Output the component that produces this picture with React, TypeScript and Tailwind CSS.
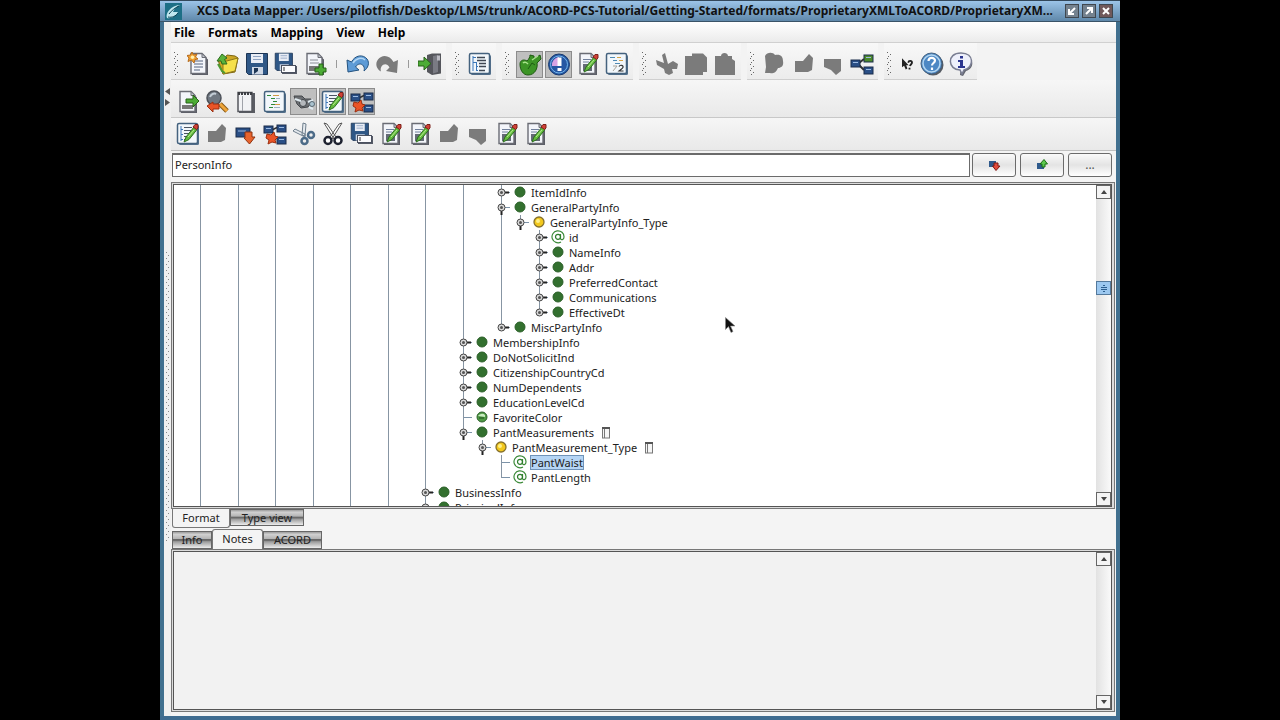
import { useState, type ReactNode } from "react";

type IconProps = { children: ReactNode };

function Glyph({ children }: IconProps) {
  return (
    <svg viewBox="0 0 24 24" width="24" height="24" fill="none" aria-hidden="true">
      {children}
    </svg>
  );
}

/* ---------- shared icon parts ---------- */

function Paper() {
  return (
    <>
      <path d="M5 2.500h10.500l5.500 5V23H5z" fill="#5b5d66" />
      <path d="M4 1.500h11l4 4V21.500H4z" fill="#f3f5fa" stroke="#6a6c74" strokeWidth="1.400" />
      <path d="M15 1.500v4h4z" fill="#c5c8d0" stroke="#6a6c74" />
    </>
  );
}

function Lines() {
  return <path d="M7 9h9M7 12h9M7 15h9M7 18h6" stroke="#8a94a8" strokeWidth="1.400" />;
}

function Pencil() {
  return (
    <>
      <path d="M8 20l2-5 8-10 3 2.500-8 10z" fill="#63bb3f" stroke="#2c6d1e" />
      <path d="M17 5l2-2.500h3V6l-1.500 1.500z" fill="#cf4136" stroke="#7d2018" />
      <path d="M12 15l6-7" stroke="#b6ec8e" />
    </>
  );
}

function Panel() {
  return (
    <>
      <rect x="3" y="3" width="20" height="20" rx="1.500" fill="#54718c" />
      <rect x="1.500" y="1.500" width="20" height="20" rx="1.500" fill="#f2f7fb" stroke="#44627e" strokeWidth="1.500" />
    </>
  );
}

function Floppy() {
  return (
    <>
      <path d="M1.500 1.500h21v21h-19l-2-2z" fill="#2f5786" stroke="#1d3554" />
      <rect x="6" y="2" width="12" height="9" fill="#e9edf5" />
      <path d="M8 4.500h8M8 7.500h8" stroke="#8ea3c2" />
      <rect x="7" y="15" width="11" height="7.500" fill="#cfd8e6" />
      <path d="M9 16h4v3l-4 3z" fill="#1d3554" />
    </>
  );
}

function Box({ x, y, color = "#2a4f86" }: { x: number; y: number; color?: string }) {
  return (
    <>
      <rect x={x} y={y} width="9" height="7" fill={color} stroke="#1b2d4a" />
      <path d={`M${x + 2} ${y + 2.5}h5`} stroke="#9dbbe2" />
    </>
  );
}

/* ---------- icons ---------- */

const newDoc = (
  <Glyph>
    <Paper />
    <Lines />
    <path d="M5 0l1.500 3L10 2 8.500 5 11 7 8 7.500 7 11 4.500 8 1 9.500 2 6 0 3.500l3.500-.5z" fill="#f0a132" stroke="#b56a1c" />
    <circle cx="5.500" cy="5.200" r="1.800" fill="#fff0b0" />
  </Glyph>
);
const openFolder = (
  <Glyph>
    <path d="M2 8l7-2 2-3 8 1 3 2-3 14-12 2z" fill="#cda724" stroke="#7c6512" />
    <path d="M7 10l15-4-3 13-12 3z" fill="#f6e04a" stroke="#8d7618" />
    <path d="M1 9l5-7 5 4-2.500 1.500L11 12H6l-1-3z" fill="#59b33c" stroke="#2c6d1e" />
    <path d="M2 12l4 7 3 2" stroke="#4d9b33" strokeWidth="2" />
  </Glyph>
);
const save = <Glyph><Floppy /></Glyph>;
const saveAs = (
  <Glyph>
    <g transform="scale(.82)"><Floppy /></g>
    <rect x="8" y="14" width="15" height="8" fill="#555a66" />
    <rect x="7.500" y="13.500" width="14" height="7" fill="#fbfbfd" stroke="#4b5160" />
    <path d="M10 15v4" stroke="#333" />
  </Glyph>
);
const docPlus = (
  <Glyph>
    <Paper />
    <rect x="6" y="14" width="10" height="5" fill="#777" />
    <path d="M7 8h8M7 11h9" stroke="#8a8d96" />
    <path d="M16 12h4v4h3v4h-3v3h-4v-3h-4v-4h4z" fill="#4cab35" stroke="#276118" />
  </Glyph>
);
const undo = (
  <Glyph>
    <path d="M1 8l1 12 11-2-3.500-3c2-3.500 6-4 8-1 1 2 1 3 .5 5 4-3 6-8 3-12C17 2 9 3 5.500 10z" fill="#5e9bd6" stroke="#23527f" />
    <path d="M7 11c3-5 9-6 12-3" stroke="#b4d7f4" strokeWidth="1.500" />
  </Glyph>
);
const redo = (
  <Glyph>
    <path d="M23 8l-1 13-11-2 3.500-3.500c-2-4-6-4-8-1-1 2-1 3-.5 5C1 17 0 11 3 7.500 7 2 15 3 18.500 10z" fill="#7b7b7b" />
  </Glyph>
);
const exit = (
  <Glyph>
    <path d="M9 3l5-1.500h9v20l-9 1.500-5-3z" fill="#55565c" />
    <path d="M15 4l5-1v17l-5 1.500z" fill="#7a7b83" />
    <path d="M19 3.500h3v5h-3z" fill="#bcbcc4" />
    <path d="M0 9h6V5l7 6.500L6 18v-4H0z" fill="#4cab35" stroke="#276118" />
  </Glyph>
);
const treeView = (
  <Glyph>
    <Panel />
    <path d="M5 4v15M5 5.500h3M5 10.500h3M8.500 10v9M8 14.500h2M8 18.500h2" stroke="#3c77b8" />
    <path d="M9 5.500h8M9 8.500h9M11 11.500h7M11 14.500h7M11 18.500h6" stroke="#3f4753" strokeWidth="1.400" />
  </Glyph>
);
const apple = (
  <Glyph>
    <path d="M2 12c0-4 4-5 7-3 2-2 3-4 3-6l4 1v3l6-4 1 4-4 4c1 5-2 12-9 12-5 0-8-5-8-11z" fill="#3c9426" stroke="#1f5a13" />
    <path d="M5 11c2-2 4 0 5 1M14 8l6-4" stroke="#a8e38b" strokeWidth="1.500" />
    <path d="M10 17l4-6 3 2" stroke="#1d5c12" />
  </Glyph>
);
const alertOrb = (
  <Glyph>
    <circle cx="12" cy="12.500" r="10.500" fill="#2657a3" stroke="#163a70" />
    <path d="M12 5a8 8 0 0 0-7 9h7z" fill="#d7a3e4" />
    <circle cx="12" cy="12.500" r="8.500" stroke="#73b6ea" />
    <path d="M10.500 5.500h4v8.500h-4zM10.500 16h4v3h-4z" fill="#fff" />
  </Glyph>
);
const editDoc = (
  <Glyph>
    <Paper />
    <rect x="7" y="12" width="9" height="7" fill="#646a76" />
    <path d="M7 7.500h8M7 10h6" stroke="#71809c" />
    <Pencil />
  </Glyph>
);
const format2 = (
  <Glyph>
    <Panel />
    <path d="M5 5.500h5M8 8.500h4M10 11.500h5" stroke="#4f8bb5" />
    <path d="M12 5.500h4M14 8.500h4" stroke="#d6a246" />
    <path d="M8 14h4l-4 5" stroke="#a8a39a" />
    <path d="M14 14.500c1-2 4.500-1.500 4 .8-.3 1.200-2.500 2.200-4 3.700h4.500" stroke="#333" strokeWidth="1.200" />
  </Glyph>
);
const cutGrey = (
  <Glyph>
    <path d="M1 8l8 3-2-8 3-2 3 11 5-3 5 3-1 5-5 0 1 4-4 2-4-2-1-4-7-4z" fill="#7b7b7b" />
  </Glyph>
);
const copyGrey = (
  <Glyph>
    <path d="M1 4h7V1.500h11l4 4V20H19v3H1z" fill="#7b7b7b" />
  </Glyph>
);
const pasteGrey = (
  <Glyph>
    <path d="M2 4h6c0-4 7-4 7 0h4v3l3 2v14H2z" fill="#7b7b7b" />
  </Glyph>
);
const blobGrey = (
  <Glyph>
    <path d="M2 4c2-4 8-4 10-1 6-1 8 2 8 6 1 5-2 7-5 7-2 5-6 6-8 5H2l1-6z" fill="#7b7b7b" />
  </Glyph>
);
const upGrey = (
  <Glyph>
    <path d="M3 9h8l6-7 4 4-1 12-4 2H3z" fill="#7b7b7b" />
  </Glyph>
);
const downGrey = (
  <Glyph>
    <path d="M3 7h17v12l-5 4-5-5-7-3z" fill="#7b7b7b" />
  </Glyph>
);
const mapNodes = (
  <Glyph>
    <path d="M9 11l5-4M9 13l5 5" stroke="#333" strokeWidth="2" />
    <Box x={1} y={8} />
    <Box x={14} y={3} color="#4c8a2b" />
    <Box x={14} y={15} />
  </Glyph>
);
const whatsThis = (
  <Glyph>
    <path d="M6 5v11l2.500-2 2 4.500 2-1-1.500-4h3z" fill="#222" />
    <path d="M13.500 10.500c.5-3 4.500-2.500 4.500 0 0 1.500-2 2-2.500 4M15 16.500v2" stroke="#222" strokeWidth="2.200" />
    <path d="M15 10h1.500" stroke="#eee" />
  </Glyph>
);
const help = (
  <Glyph>
    <circle cx="13" cy="13" r="10.500" fill="#555a62" />
    <circle cx="11.500" cy="11.500" r="10.500" fill="#4d88c4" stroke="#44617f" />
    <circle cx="11.500" cy="11.500" r="8.500" stroke="#b5d7f1" strokeWidth="1.500" />
    <path d="M8.500 9c0-4 6.500-4 6.500-.5 0 2.500-3 2.500-3 5M12 15.500v2.500" stroke="#fff" strokeWidth="2.200" />
  </Glyph>
);
const info = (
  <Glyph>
    <path d="M13 3c13 0 13 14 4 16l-3 5-3-1z" fill="#62656f" />
    <path d="M12 1c14 0 13 15 3 17l-2 4-2-4C-1 18-3 1 12 1z" fill="#eef0fb" stroke="#7a7e92" strokeWidth="1.500" />
    <path d="M11 4h3v2.500h-3zM9 8h5v6h2v2H9v-2h2v-4H9z" fill="#2b3590" />
  </Glyph>
);
const docArrow = (
  <Glyph>
    <Paper />
    <rect x="6" y="15" width="11" height="4" fill="#777" />
    <path d="M10 9h7V5l6 6-6 6v-4h-7z" fill="#4cab35" stroke="#276118" />
  </Glyph>
);
const searchBack = (
  <Glyph>
    <path d="M15 14l7 7" stroke="#8a5a14" strokeWidth="5" />
    <path d="M15 14l7 7" stroke="#eea53a" strokeWidth="3" />
    <circle cx="9" cy="8" r="7" fill="#6f7781" stroke="#4b5058" strokeWidth="1.500" />
    <path d="M5 7c1-3 4-4 6-3" stroke="#c3cdd6" strokeWidth="2" />
    <path d="M2 16l6-4v2h6v5H8v3z" fill="#ea5427" stroke="#9c2f10" />
  </Glyph>
);
const notepad = (
  <Glyph>
    <rect x="5" y="3" width="16" height="20" fill="#5a5c63" />
    <rect x="4" y="2.500" width="14" height="19" fill="#f1f2f5" stroke="#55575e" strokeWidth="1.500" />
    <path d="M4 3.500h14" stroke="#3c3e44" strokeWidth="3" strokeDasharray="2 1" />
    <path d="M8.500 6v15" stroke="#9fa2aa" />
  </Glyph>
);
const outline = (
  <Glyph>
    <Panel />
    <path d="M4 5.500h4M8 8.500h4M10 11.500h4M8 14.500h4M6 17.500h4" stroke="#2f8a3a" strokeWidth="1.200" />
    <path d="M10 5.500h6M12 14.500h5" stroke="#d09a44" />
    <path d="M13 8.500h4M11 17.500h6" stroke="#9fb0c2" />
  </Glyph>
);
const eyeTool = (
  <Glyph>
    <path d="M2 6h8l3 3h6v4l-3 4-7 1-4-4z" fill="#6c6f73" stroke="#45484c" />
    <circle cx="11" cy="13" r="3.500" fill="#b4b8bc" stroke="#3e4246" />
    <path d="M16 12l5-2M17 17l4 2M3 9l6 2" stroke="#dfeaf0" strokeWidth="2" />
    <circle cx="20" cy="14" r="2.500" fill="#aac3d0" stroke="#5a6a74" />
  </Glyph>
);
const editPanel = (
  <Glyph>
    <Panel />
    <path d="M5 4v15M5 7.500h2M5 12.500h2M5 17.500h2" stroke="#3c77b8" />
    <path d="M8 5.500h8M8 8.500h7M8 11.500h5M8 14.500h4M8 17.500h3" stroke="#4b5664" strokeWidth="1.200" />
    <Pencil />
  </Glyph>
);
const unlink = (
  <Glyph>
    <path d="M9 8l6-3M11 14l5 4" stroke="#333" strokeWidth="1.500" />
    <Box x={1} y={4} />
    <Box x={14} y={3} />
    <Box x={14} y={15} />
    <path d="M4 12l4 1 3-3 1 4 3 1-3 3 1 3-4-1-4 2 1-4-3-2z" fill="#ea5427" stroke="#9c2f10" />
  </Glyph>
);
const boxDown = (
  <Glyph>
    <rect x="2" y="6" width="14" height="9" fill="#2a4f86" stroke="#1b2d4a" />
    <path d="M4 9h8" stroke="#9dbbe2" />
    <path d="M11 10h7v5h3l-5.500 7L10 16h1z" fill="#e8642d" stroke="#8e3211" />
  </Glyph>
);
const scissorsBlue = (
  <Glyph>
    <path d="M11 1l3 1-1 12-3-1zM1 9l2-2 10 5v3z" fill="#e4e9ee" stroke="#6f7f8d" />
    <circle cx="12.500" cy="19" r="3" stroke="#4c6b88" strokeWidth="2.500" />
    <circle cx="19" cy="13" r="3" stroke="#4c6b88" strokeWidth="2.500" />
  </Glyph>
);
const scissors = (
  <Glyph>
    <path d="M3 1l3 1 9 13-2 2zM21 1l-3 1-9 13 2 2z" fill="#fff" stroke="#555" />
    <circle cx="7" cy="18.500" r="3.500" fill="#fff" stroke="#1e2230" strokeWidth="2.500" />
    <circle cx="17" cy="18.500" r="3.500" fill="#fff" stroke="#1e2230" strokeWidth="2.500" />
  </Glyph>
);

/* ---------- toolbars ---------- */

type Tool = { label: string; icon: ReactNode; pressed?: boolean } | "gap";

function ToolButton({ label, icon, pressed }: { label: string; icon: ReactNode; pressed?: boolean }) {
  return (
    <button
      type="button"
      aria-label={label}
      aria-pressed={pressed}
      className={
        "mx-px flex h-[27px] w-[27px] items-center justify-center " +
        (pressed ? "border border-[#8c8c8c] bg-[#bfbfbf]" : "")
      }
    >
      {icon}
    </button>
  );
}

function Tools({ items }: { items: Tool[] }) {
  return (
    <>
      {items.map((t, i) =>
        t === "gap" ? (
          <span key={i} className="flex w-[14px] justify-center">
            <span className="h-2 w-px bg-[#9a9a9a]" />
          </span>
        ) : (
          <ToolButton key={i} {...t} />
        ),
      )}
    </>
  );
}

function Grip() {
  return (
    <svg width="13" height="26" aria-hidden="true">
      {[1, 7, 13, 19].map((y) => (
        <g key={y} fill="#666">
          <rect x="3" y={y} width="1" height="1" />
          <rect x="6" y={y + 2} width="1" height="1" />
          <rect x="4" y={y + 4} width="1" height="1" />
        </g>
      ))}
    </svg>
  );
}

const groups: Tool[][] = [
  [
    { label: "New", icon: newDoc },
    { label: "Open", icon: openFolder },
    { label: "Save", icon: save },
    { label: "Save as", icon: saveAs },
    { label: "Add file", icon: docPlus },
    "gap",
    { label: "Undo", icon: undo },
    { label: "Redo", icon: redo },
    "gap",
    { label: "Exit", icon: exit },
  ],
  [{ label: "Tree view", icon: treeView }],
  [
    { label: "Validate", icon: apple, pressed: true },
    { label: "Warnings", icon: alertOrb, pressed: true },
    { label: "Edit file", icon: editDoc },
    { label: "Format source", icon: format2 },
  ],
  [
    { label: "Cut", icon: cutGrey },
    { label: "Copy", icon: copyGrey },
    { label: "Paste", icon: pasteGrey },
  ],
  [
    { label: "Add node", icon: blobGrey },
    { label: "Move up", icon: upGrey },
    { label: "Move down", icon: downGrey },
    { label: "Map nodes", icon: mapNodes },
  ],
];

const secondRow: Tool[] = [
  { label: "Import", icon: docArrow },
  { label: "Find previous", icon: searchBack },
  { label: "Notepad", icon: notepad },
  { label: "Outline", icon: outline },
  { label: "Show hidden", icon: eyeTool, pressed: true },
  { label: "Show edits", icon: editPanel, pressed: true },
  { label: "Show unmapped", icon: unlink, pressed: true },
];

const thirdRow: Tool[] = [
  { label: "Edit tree", icon: editPanel },
  { label: "Raise", icon: upGrey },
  { label: "Insert below", icon: boxDown },
  { label: "Unlink", icon: unlink },
  { label: "Trim", icon: scissorsBlue },
  { label: "Cut node", icon: scissors },
  { label: "Save node as", icon: saveAs },
  { label: "Edit node", icon: editDoc },
  { label: "Edit type", icon: editDoc },
  { label: "Promote", icon: upGrey },
  { label: "Demote", icon: downGrey },
  { label: "Edit notes", icon: editDoc },
  { label: "Edit format", icon: editDoc },
];

/* ---------- tree ---------- */

type Handle = "closed" | "open" | "leaf" | "end";
type Kind = "element" | "type" | "attribute" | "local";
type Row = {
  name: string;
  depth: number;
  lines: number[];
  handle: Handle;
  kind: Kind;
  last?: boolean;
  note?: boolean;
};

const rows: Row[] = [
  { name: "ItemIdInfo", depth: 4, lines: [0, 2], handle: "closed", kind: "element" },
  { name: "GeneralPartyInfo", depth: 4, lines: [0, 2], handle: "open", kind: "element" },
  { name: "GeneralPartyInfo_Type", depth: 5, lines: [0, 2, 4], handle: "open", kind: "type", last: true },
  { name: "id", depth: 6, lines: [0, 2, 4], handle: "closed", kind: "attribute" },
  { name: "NameInfo", depth: 6, lines: [0, 2, 4], handle: "closed", kind: "element" },
  { name: "Addr", depth: 6, lines: [0, 2, 4], handle: "closed", kind: "element" },
  { name: "PreferredContact", depth: 6, lines: [0, 2, 4], handle: "closed", kind: "element" },
  { name: "Communications", depth: 6, lines: [0, 2, 4], handle: "closed", kind: "element" },
  { name: "EffectiveDt", depth: 6, lines: [0, 2, 4], handle: "closed", kind: "element", last: true },
  { name: "MiscPartyInfo", depth: 4, lines: [0, 2], handle: "closed", kind: "element", last: true },
  { name: "MembershipInfo", depth: 2, lines: [0], handle: "closed", kind: "element" },
  { name: "DoNotSolicitInd", depth: 2, lines: [0], handle: "closed", kind: "element" },
  { name: "CitizenshipCountryCd", depth: 2, lines: [0], handle: "closed", kind: "element" },
  { name: "NumDependents", depth: 2, lines: [0], handle: "closed", kind: "element" },
  { name: "EducationLevelCd", depth: 2, lines: [0], handle: "closed", kind: "element" },
  { name: "FavoriteColor", depth: 2, lines: [0], handle: "leaf", kind: "local" },
  { name: "PantMeasurements", depth: 2, lines: [0], handle: "open", kind: "element", last: true, note: true },
  { name: "PantMeasurement_Type", depth: 3, lines: [0], handle: "open", kind: "type", last: true, note: true },
  { name: "PantWaist", depth: 4, lines: [0], handle: "leaf", kind: "attribute" },
  { name: "PantLength", depth: 4, lines: [0], handle: "end", kind: "attribute", last: true },
  { name: "BusinessInfo", depth: 0, lines: [], handle: "closed", kind: "element" },
  { name: "PrincipalInfo", depth: 0, lines: [], handle: "closed", kind: "element" },
];

function NodeHandle({ handle, last }: { handle: Handle; last?: boolean }) {
  const knob = handle === "closed" || handle === "open";
  return (
    <svg width="19" height="15" className="shrink-0" aria-hidden="true">
      <path d={last ? "M9.500 0v8" : "M9.500 0v15"} stroke="#8795a3" />
      <path d="M10 7.500h8" stroke="#7c93a8" />
      {knob && (
        <>
          <path d={handle === "closed" ? "M12 7.500h5" : "M9.500 10v5"} stroke="#222" strokeWidth="2" />
          <circle cx="9.500" cy="7.500" r="3.500" fill="#d9d9d9" stroke="#444" />
          <circle cx="9.500" cy="7.500" r="1.500" fill="#555" />
        </>
      )}
    </svg>
  );
}

function NodeIcon({ kind }: { kind: Kind }) {
  return (
    <svg width="19" height="15" className="shrink-0" aria-hidden="true">
      {kind === "element" && <circle cx="9" cy="7" r="5" fill="#33702f" stroke="#2a5f27" />}
      {kind === "local" && (
        <>
          <circle cx="9" cy="7" r="5" fill="#4f9a45" stroke="#2a5f27" />
          <path d="M5 6a4 3 0 0 1 7-1v2z" fill="#c9ecc0" />
          <path d="M6 8h5" stroke="#1f4f1c" />
        </>
      )}
      {kind === "type" && (
        <>
          <circle cx="9" cy="7" r="5" fill="#f2c81e" stroke="#86712c" strokeWidth="1.300" />
          <circle cx="8" cy="6" r="2" fill="#fff08a" />
        </>
      )}
      {kind === "attribute" && (
        <>
          <path d="M12 12a6 6 0 1 1 3-5c0 3-3 3.500-3.500 1.500V4" stroke="#3b8a38" strokeWidth="1.200" fill="none" />
          <circle cx="9" cy="6.800" r="2.500" stroke="#2e7d2b" strokeWidth="1.200" fill="none" />
        </>
      )}
    </svg>
  );
}

function NoteIcon() {
  return (
    <svg width="10" height="13" className="ml-1.5 shrink-0" aria-hidden="true">
      <rect x="1.500" y="2" width="7" height="10" fill="#f5f5f5" stroke="#777" />
      <path d="M1 2h8" stroke="#555" strokeWidth="2" />
      <path d="M3.500 3v9" stroke="#777" />
    </svg>
  );
}

const ancestors = ["w-[38px]", "w-[37px]", "w-[38px]", "w-[37px]", "w-[38px]", "w-[37px]"];

function TreeRow({ row, selected, onSelect }: { row: Row; selected: boolean; onSelect: () => void }) {
  return (
    <li role="treeitem" aria-selected={selected} className="flex h-[15px] items-center pl-[17px]">
      {ancestors.map((w, i) => (
        <span key={i} className={w + " h-full shrink-0 pl-[9px]"}>
          <span className="block h-full w-px bg-[#8795a3]" />
        </span>
      ))}
      {Array.from({ length: row.depth }, (_, i) => (
        <span key={i} className="h-full w-[19px] shrink-0 pl-[9px]">
          {row.lines.includes(i) && <span className="block h-full w-px bg-[#8795a3]" />}
        </span>
      ))}
      <NodeHandle handle={row.handle} last={row.last} />
      <NodeIcon kind={row.kind} />
      <button
        type="button"
        onClick={onSelect}
        className={
          "h-[15px] border leading-[13px] whitespace-nowrap " +
          (selected ? "border-[#6f93b8] bg-[#b5d5f5]" : "border-transparent")
        }
      >
        {row.name}
      </button>
      {row.note && <NoteIcon />}
    </li>
  );
}

/* ---------- panes ---------- */

function ScrollButton({ down }: { down?: boolean }) {
  return (
    <button
      type="button"
      aria-label={down ? "Scroll down" : "Scroll up"}
      className="flex h-[14px] shrink-0 items-center justify-center border border-[#666] bg-[#f4f4f4]"
    >
      <svg width="6" height="4" aria-hidden="true">
        <path d={down ? "M0 0h6L3 4z" : "M0 4h6L3 0z"} fill="#444" />
      </svg>
    </button>
  );
}

function Scrollbar({ thumb }: { thumb?: boolean }) {
  return (
    <div className="flex w-[15px] shrink-0 flex-col bg-linear-to-r from-[#e2e2e2] to-[#fafafa]">
      <ScrollButton />
      <div className="flex-1 pt-[82px]">
        {thumb && (
          <div className="flex h-[14px] flex-col items-center justify-center gap-px border border-[#54799c] bg-[#9cc8f0]">
            <span className="h-px w-0.5 bg-[#2c5f90]" />
            <span className="h-px w-1.5 bg-[#2c5f90]" />
            <span className="h-px w-1.5 bg-[#2c5f90]" />
            <span className="h-px w-0.5 bg-[#2c5f90]" />
          </div>
        )}
      </div>
      <ScrollButton down />
    </div>
  );
}

const sideTab =
  "border border-[#666] bg-[linear-gradient(#9c9c9c,#d0d0d0_15%,#b4b4b4_42%,#666_46%,#6e6e6e_54%,#9a9a9a_60%,#ededed)] text-[#222]";

const searchButton =
  "flex w-11 items-center justify-center rounded-[3px] border border-[#6b6b6b] bg-linear-to-b from-[#fafafa] via-[#e4e4e4] to-white";

function WindowButton({ label, path, dark }: { label: string; path: string; dark?: boolean }) {
  return (
    <button
      type="button"
      aria-label={label}
      className={
        "flex h-[14px] w-[14px] items-center justify-center border border-[#3f474f] " +
        (dark ? "bg-[#70585a]" : "bg-[#74828f]")
      }
    >
      <svg width="10" height="10" fill="none" aria-hidden="true">
        <path d={path} stroke="#fff" strokeWidth="2" />
      </svg>
    </button>
  );
}

export default function App() {
  const [query, setQuery] = useState("PersonInfo");
  const [selected, setSelected] = useState("PantWaist");

  return (
    <div className="flex min-h-screen flex-col bg-black px-40 font-['Noto_Sans',sans-serif] text-[11px] text-[#222]">
      <main className="flex flex-1 flex-col border-b-4 border-[#3f6c90] bg-[#f4f4f4]">
        <header className="flex h-[22px] items-center gap-[5px] border-t border-b border-t-[#33475a] border-b-[#3a5468] bg-linear-to-b from-[#9cc4e8] to-[#5f88aa] px-[5px] pr-[7px]">
          <svg width="17" height="17" viewBox="0 0 17 17" fill="none" className="shrink-0" aria-hidden="true">
            <rect width="17" height="17" fill="#1d6f86" />
            <path d="M2 15C0 9 8 2 15 2c-3 1-6 4-7 7h5c-2 4-7 7-11 6z" fill="#bfe6ee" />
            <path d="M4 11c3-4 6-6 10-8M3 14c4 1 8-1 10-4" stroke="#0e4456" />
          </svg>
          <h1 className="min-w-0 flex-1 overflow-hidden pl-[10px] text-[12px] leading-5 font-bold whitespace-nowrap text-[#111]">
            XCS Data Mapper: /Users/pilotfish/Desktop/LMS/trunk/ACORD-PCS-Tutorial/Getting-Started/formats/ProprietaryXMLToACORD/ProprietaryXM...
          </h1>
          <div className="flex gap-[3px]">
            <WindowButton label="Minimize" path="M8 2L3 7M2 3v5h5" />
            <WindowButton label="Maximize" path="M2 8l5-5M3 2h5v5" />
            <WindowButton label="Close" path="M2 2l6 6M8 2L2 8" dark />
          </div>
        </header>

        <div className="flex flex-1 border-r-4 border-l-4 border-[#41708f]">
          <div className="flex w-[7px] shrink-0 flex-col items-center bg-[#f0f0f0] pt-[66px]">
            <svg width="5" height="18" aria-hidden="true">
              <path d="M5 0v7L0 3.500zM0 11v7l5-3.500z" fill="#555" />
            </svg>
            <svg width="5" height="290" className="mt-[146px]" aria-hidden="true">
              <defs>
                <pattern id="dots" width="5" height="6" patternUnits="userSpaceOnUse">
                  <rect x="1" y="0" width="1" height="1" fill="#888" />
                  <rect x="3" y="3" width="1" height="1" fill="#888" />
                </pattern>
              </defs>
              <rect width="5" height="290" fill="url(#dots)" />
            </svg>
          </div>

          <div className="flex min-w-0 flex-1 flex-col">
            <nav className="flex h-[21px] items-center gap-[13px] border-b border-[#d0d0d0] bg-linear-to-b from-white to-[#ebebeb] pt-px pl-[3px] text-[12px] font-bold text-black">
              {["File", "Formats", "Mapping", "View", "Help"].map((m) => (
                <button key={m} type="button">{m}</button>
              ))}
            </nav>

            <div className="flex h-[37px] gap-1.5 bg-[#f3f3f3]">
              {groups.map((g, i) => (
                <div key={i} className="flex items-center border-b border-[#cfcfcf] bg-linear-to-b from-[#f8f8f8] to-[#ececec] pt-1.5 pr-[2px]">
                  <Grip />
                  <Tools items={g} />
                </div>
              ))}
              <div className="flex items-center border-b border-[#cfcfcf] bg-linear-to-b from-[#f8f8f8] to-[#ececec] pt-1.5 pr-[2px]">
                <Grip />
                <button type="button" aria-label="Context help" className="flex w-5 justify-center">
                  {whatsThis}
                </button>
                <Tools items={[{ label: "Help", icon: help }, { label: "About", icon: info }]} />
              </div>
            </div>

            <div className="flex h-[38px] items-center border-b border-[#c8c8c8] bg-linear-to-b from-[#f6f6f6] to-[#e9e9e9] pt-1.5 pl-[2px]">
              <Tools items={secondRow} />
            </div>
            <div className="flex h-[33px] items-center border-b border-[#c0c0c0] bg-linear-to-b from-[#f6f6f6] to-[#e9e9e9] pl-[2px]">
              <Tools items={thirdRow} />
            </div>

            <div className="mt-[2px] flex h-6 gap-[2px] pr-1 pl-px">
              <input
                aria-label="Search"
                value={query}
                onChange={(e) => setQuery(e.target.value)}
                className="min-w-0 flex-1 border border-t-2 border-[#6b6b6b] bg-white px-[2px] outline-none"
              />
              <div className="flex gap-1">
                <button type="button" aria-label="Find next" className={searchButton}>
                  <svg width="13" height="12" aria-hidden="true">
                    <rect x="1" y="2" width="7" height="6" fill="#2f5a8c" />
                    <path d="M6 4h4v3h2L8 11.500 4.500 7H6z" fill="#e04a3c" stroke="#7d1a14" />
                  </svg>
                </button>
                <button type="button" aria-label="Find previous" className={searchButton}>
                  <svg width="13" height="12" aria-hidden="true">
                    <rect x="1" y="4" width="7" height="6" fill="#2f5a8c" />
                    <path d="M6 8h3V5h2.500L8 .5 4 5h2z" fill="#5cc94e" stroke="#1a6e14" />
                  </svg>
                </button>
                <button type="button" className={searchButton + " text-[12px] text-[#555]"}>
                  ...
                </button>
              </div>
            </div>

            <section className="relative mt-[5px] mr-px flex h-[327px] border border-[#777] bg-[#dcdcdc] p-px pr-[2px]">
              <div className="flex min-w-0 flex-1 border border-[#555] bg-white">
                <ul role="tree" aria-label="Format tree" className="min-w-0 flex-1 overflow-hidden">
                  {rows.map((r) => (
                    <TreeRow key={r.name} row={r} selected={selected === r.name} onSelect={() => setSelected(r.name)} />
                  ))}
                </ul>
                <Scrollbar thumb />
              </div>
              <svg width="11" height="17" className="absolute top-[134px] left-[553px]" aria-hidden="true">
                <path d="M.5.5v12l3-3 2.500 6 2-1-2.500-5.500H10z" fill="#111" stroke="#888" strokeWidth=".6" />
              </svg>
            </section>

            <div className="flex h-5 items-start pl-px" role="tablist" aria-label="Tree views">
              <button type="button" role="tab" aria-selected="true" className="h-[19px] w-[58px] rounded-b-[3px] border border-t-0 border-[#777] bg-[#f4f4f4]">
                Format
              </button>
              <button type="button" role="tab" aria-selected="false" className={"h-[17px] w-[74px] leading-4 " + sideTab}>
                Type view
              </button>
            </div>

            <div className="flex h-5 items-end pl-px" role="tablist" aria-label="Details">
              <button type="button" role="tab" aria-selected="false" className={"h-[18px] w-10 leading-4 " + sideTab}>
                Info
              </button>
              <button type="button" role="tab" aria-selected="true" className="h-5 w-[51px] rounded-t-[3px] border border-b-0 border-[#777] bg-[#f4f4f4]">
                Notes
              </button>
              <button type="button" role="tab" aria-selected="false" className={"h-[18px] w-[59px] leading-4 " + sideTab}>
                ACORD
              </button>
            </div>

            <section className="mr-px mb-1 flex flex-1 border border-[#777] bg-[#dcdcdc] p-px pr-[2px]">
              <div className="flex min-w-0 flex-1 border border-[#555] bg-[#f2f2f2]">
                <textarea aria-label="Notes" className="min-w-0 flex-1 resize-none bg-transparent outline-none" />
                <Scrollbar />
              </div>
            </section>
          </div>
        </div>
      </main>
    </div>
  );
}
